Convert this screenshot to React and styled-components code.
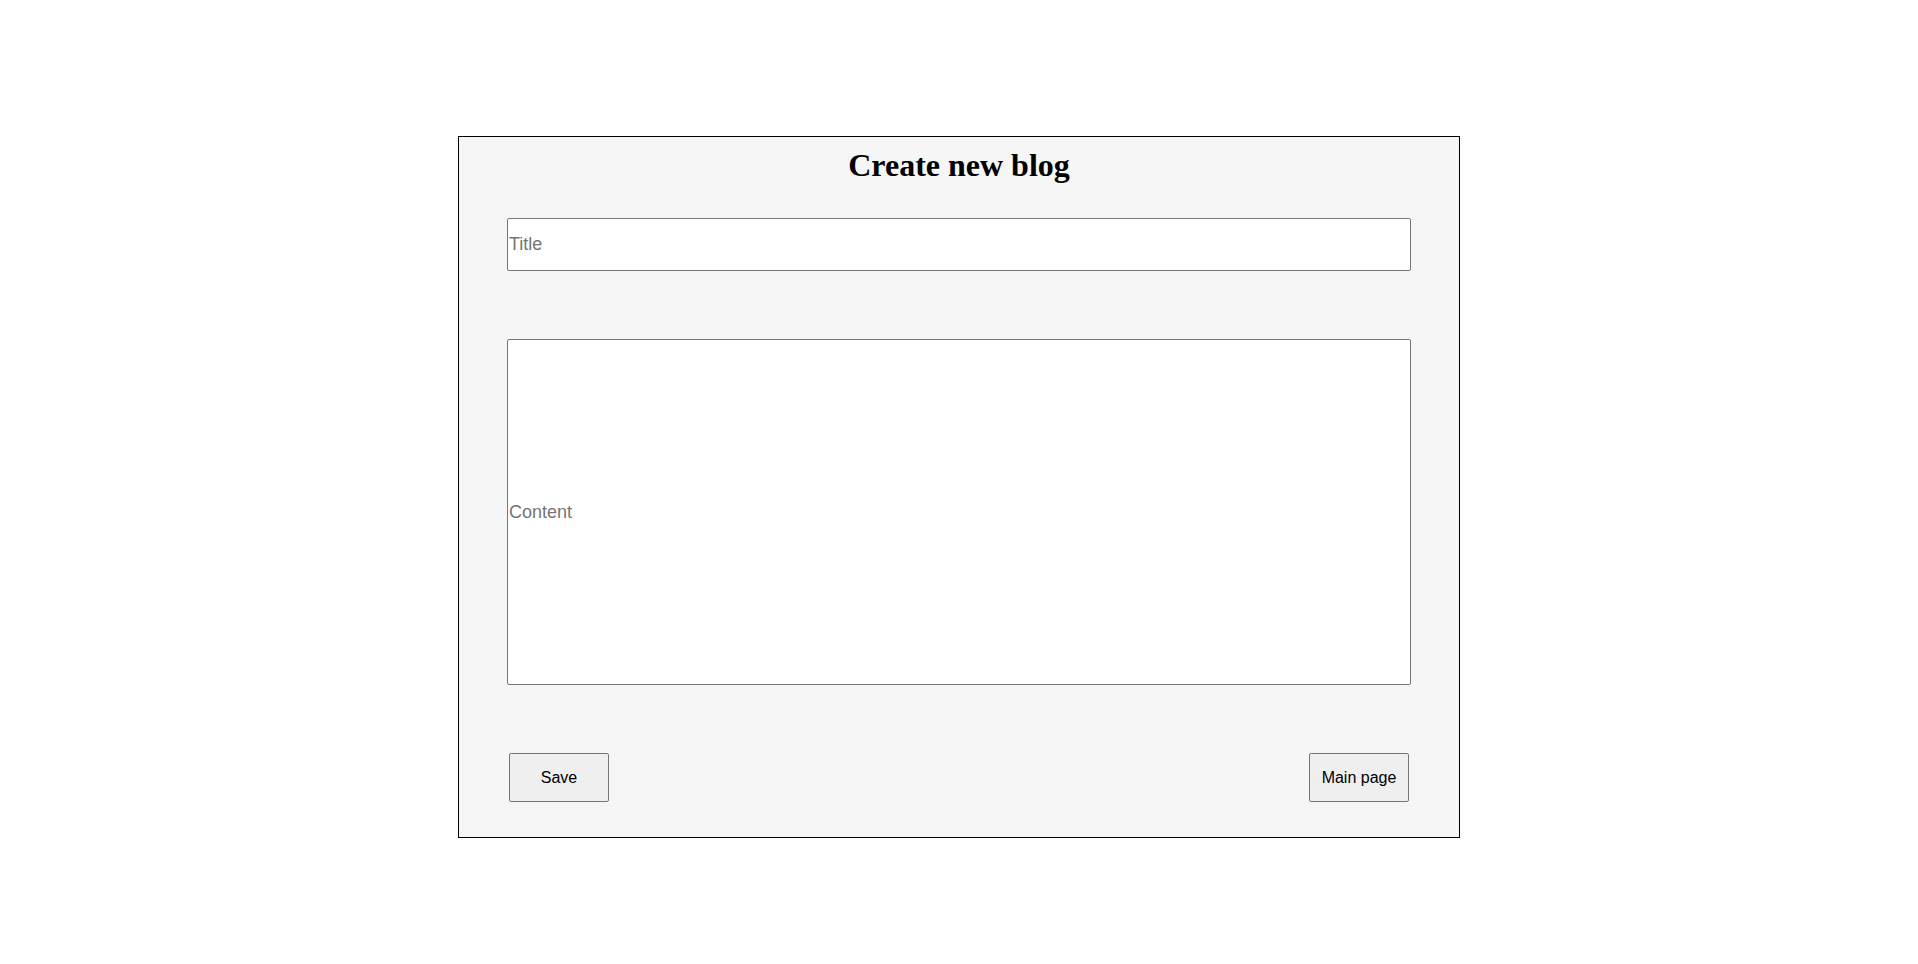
import React, { useState } from 'react';
import styled, { createGlobalStyle } from 'styled-components';

const GlobalStyle = createGlobalStyle`
  body {
    margin: 0;
    background: #ffffff;
    font-family: "Liberation Serif", "Times New Roman", serif;
  }
`;

const Page = styled.div`
  padding-top: 136px;
`;

const Card = styled.form`
  width: 904px;
  margin: 0 auto;
  border: 1px solid #000000;
  background: #f6f6f6;
  padding: 10px 48px 35px;
  box-sizing: content-box;
  display: flex;
  flex-direction: column;
`;

const Heading = styled.h1`
  margin: 0 0 34px;
  text-align: center;
  font-family: "Liberation Serif", "Times New Roman", serif;
  font-size: 32px;
  font-weight: bold;
  line-height: 37px;
  color: #000000;
`;

const Field = styled.input`
  box-sizing: border-box;
  width: 100%;
  height: ${props => props.tall ? '346px' : '53px'};
  margin: 0 0 68px;
  padding: 1px 1px;
  border: 1px solid #767676;
  border-radius: 2px;
  background: #ffffff;
  font-family: "Liberation Sans", Arial, sans-serif;
  font-size: 18px;
  color: #000000;
  :focus { outline: 0; }
  &::placeholder { color: #757575; }
`;

const Actions = styled.div`
  display: flex;
  justify-content: space-between;
  padding: 0 2px;
`;

const Button = styled.button`
  width: 100px;
  height: 49px;
  padding: 0;
  border: 1px solid #767676;
  border-radius: 2px;
  background: #efefef;
  font-family: "Liberation Sans", Arial, sans-serif;
  font-size: 16px;
  color: #000000;
  cursor: pointer;
  :hover { background: #e5e5e5; }
`;

export default () => {
  const [title, setTitle] = useState('');
  const [content, setContent] = useState('');

  return (
    <Page>
      <GlobalStyle />
      <Card onSubmit={e => e.preventDefault()}>
        <Heading>Create new blog</Heading>
        <Field placeholder="Title" value={title} onChange={e => setTitle(e.target.value)} />
        <Field tall placeholder="Content" value={content} onChange={e => setContent(e.target.value)} />
        <Actions>
          <Button type="submit">Save</Button>
          <Button type="button">Main page</Button>
        </Actions>
      </Card>
    </Page>
  );
}
